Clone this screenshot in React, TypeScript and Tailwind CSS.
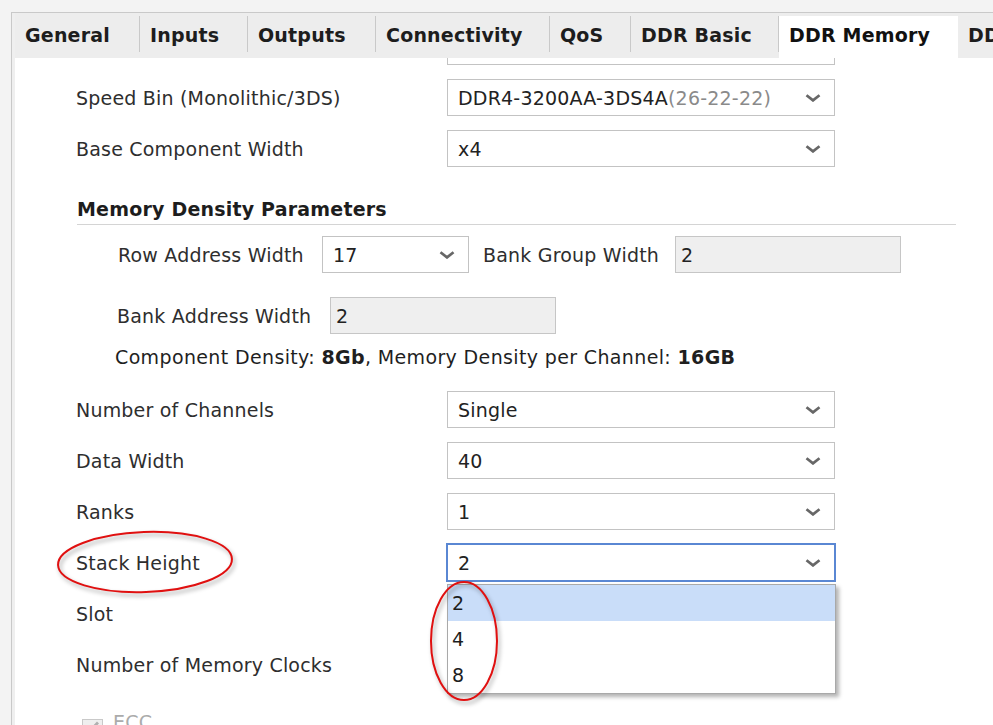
import React from 'react'

type Tab = { name: string; w: string }

const tabs: Tab[] = [
    { name: 'General', w: 'w-[124px]' },
    { name: 'Inputs', w: 'w-[107px]' },
    { name: 'Outputs', w: 'w-[127px]' },
    { name: 'Connectivity', w: 'w-[173px]' },
    { name: 'QoS', w: 'w-[80px]' },
    { name: 'DDR Basic', w: 'w-[147px]' },
]

const Chevron = () => (
    <svg width="16" height="8" viewBox="0 0 16 8" className="shrink-0">
        <path d="M1.5 1.2 L8 6.4 L14.5 1.2" fill="none" stroke="#676767" strokeWidth="2.7" />
    </svg>
)

function Combo({ children, className = 'w-[388px]', focused = false }: { children?: React.ReactNode; className?: string; focused?: boolean }) {
    return (
        <div
            className={
                focused
                    ? `${className} h-[37px] flex items-center justify-between pl-[10px] pr-[13px] bg-white border border-[#5a87d3] outline-1 outline-[#5a87d3]`
                    : `${className} h-[37px] flex items-center justify-between pl-[10px] pr-[13px] bg-white border border-[#c3c3c3]`
            }
        >
            <span className="text-[#222] leading-[22px] whitespace-nowrap">{children}</span>
            <Chevron />
        </div>
    )
}

function Field({ value }: { value: string }) {
    return (
        <div className="w-[226px] h-[37px] flex items-center pl-[5px] bg-[#efefef] border border-[#c6c6c6]">
            <span className="text-[#222] leading-[22px]">{value}</span>
        </div>
    )
}

function Row({ label, children, className = 'mt-[14px]' }: { label: string; children?: React.ReactNode; className?: string }) {
    return (
        <div className={`${className} flex items-center h-[37px]`}>
            <span className="w-[371px] shrink-0 leading-[22px] text-[#2e2e2e] whitespace-nowrap">{label}</span>
            {children}
        </div>
    )
}

export default function App() {
    return (
        <div className="relative w-[993px] h-[725px] overflow-hidden bg-[#f3f3f3] text-[19px] tracking-[0.2px] font-['DejaVu_Sans',sans-serif]">
            <div className="ml-[11px] mt-[12px] h-[713px] border-l border-t border-[#c9c9c9] pl-[3px] bg-[#efefef] flex flex-col">
                {/* tab strip */}
                <div className="h-[45px] pt-[3px] flex bg-[#ededed] shrink-0">
                    {tabs.map((t) => (
                        <React.Fragment key={t.name}>
                            <div className={`${t.w} shrink-0 pl-[10px] pt-[8px] font-bold leading-[22px] text-[#1d1d1d] whitespace-nowrap`}>
                                {t.name}
                            </div>
                            <div className="w-px h-[36px] bg-[#c9c9c9] shrink-0" />
                        </React.Fragment>
                    ))}
                    <div className="w-[179px] shrink-0 bg-white pl-[10px] pt-[8px] font-bold leading-[22px] text-[#111] whitespace-nowrap">
                        DDR Memory
                    </div>
                    <div className="flex-1 pl-[10px] pt-[8px] font-bold leading-[22px] text-[#1d1d1d] whitespace-nowrap overflow-hidden">
                        DD
                    </div>
                </div>

                {/* page content, scrolled down a little */}
                <div className="relative flex-1 overflow-hidden bg-white pl-[61px]">
                    <Row label="" className="mt-[-30px]">
                        <Combo />
                    </Row>
                    <Row label="Speed Bin (Monolithic/3DS)">
                        <Combo>
                            DDR4-3200AA-3DS4A<span className="text-[#8a8a8a]">(26-22-22)</span>
                        </Combo>
                    </Row>
                    <Row label="Base Component Width">
                        <Combo>x4</Combo>
                    </Row>

                    <div className="mt-[31px] ml-px w-[879px] pb-[4px] border-b border-[#d4d4d4] font-bold leading-[22px] text-[#1d1d1d]">
                        Memory Density Parameters
                    </div>

                    <div className="mt-[11px] ml-[42px] flex items-center h-[37px]">
                        <span className="w-[204px] shrink-0 leading-[22px] text-[#2e2e2e] whitespace-nowrap">Row Address Width</span>
                        <Combo className="w-[147px]">17</Combo>
                        <span className="ml-[14px] w-[192px] shrink-0 leading-[22px] text-[#2e2e2e] whitespace-nowrap">Bank Group Width</span>
                        <Field value="2" />
                    </div>

                    <div className="mt-[24px] ml-[41px] flex items-center h-[37px]">
                        <span className="w-[213px] shrink-0 leading-[22px] text-[#2e2e2e] whitespace-nowrap">Bank Address Width</span>
                        <Field value="2" />
                    </div>

                    <div className="mt-[12px] ml-[39px] leading-[22px] tracking-[0.36px] text-[#1f1f1f] whitespace-nowrap">
                        Component Density: <b>8Gb</b>, Memory Density per Channel: <b>16GB</b>
                    </div>

                    <Row label="Number of Channels" className="mt-[23px]">
                        <Combo>Single</Combo>
                    </Row>
                    <Row label="Data Width">
                        <Combo>40</Combo>
                    </Row>
                    <Row label="Ranks">
                        <Combo>1</Combo>
                    </Row>
                    <Row label="Stack Height">
                        <Combo focused>2</Combo>
                    </Row>
                    {/* these two boxes sit under the open list */}
                    <Row label="Slot">
                        <Combo />
                    </Row>
                    <Row label="Number of Memory Clocks">
                        <Combo />
                    </Row>

                    <div className="mt-[36px] ml-[6px] flex items-start gap-[10px]">
                        <div className="w-[21px] h-[21px] border border-[#c9c9c9] bg-[#efefef] flex justify-center pt-[1px]">
                            <svg width="15" height="12" viewBox="0 0 15 12">
                                <path d="M2 5.5 L5.8 9 L13 1.5" fill="none" stroke="#b0b0b0" strokeWidth="2.8" />
                            </svg>
                        </div>
                        <span className="leading-[19px] text-[#ababab] mt-[-6px]">ECC</span>
                    </div>

                    {/* open list of the Stack Height box */}
                    <div className="absolute left-[432px] top-[526px] w-[389px] bg-white border border-[#a9a9a9] shadow-[3px_3px_4px_rgba(0,0,0,0.3)]">
                        {['2', '4', '8'].map((v, i) => (
                            <div
                                key={v}
                                className={i === 0 ? 'h-[36px] flex items-center pl-[4px] bg-[#c9ddf9] text-[#1d1d1d]' : 'h-[36px] flex items-center pl-[4px] text-[#1d1d1d]'}
                            >
                                {v}
                            </div>
                        ))}
                    </div>
                </div>
            </div>

            {/* red annotation marks */}
            <svg
                className="absolute left-0 top-0 pointer-events-none drop-shadow-[2px_3px_2px_rgba(0,0,0,0.35)]"
                width="993"
                height="725"
                viewBox="0 0 993 725"
            >
                <ellipse cx="145" cy="562" rx="87" ry="30" fill="none" stroke="#e01010" strokeWidth="2" transform="rotate(-2 145 562)" />
                <ellipse cx="464" cy="641" rx="33" ry="59" fill="none" stroke="#e01010" strokeWidth="2" />
            </svg>
        </div>
    )
}
